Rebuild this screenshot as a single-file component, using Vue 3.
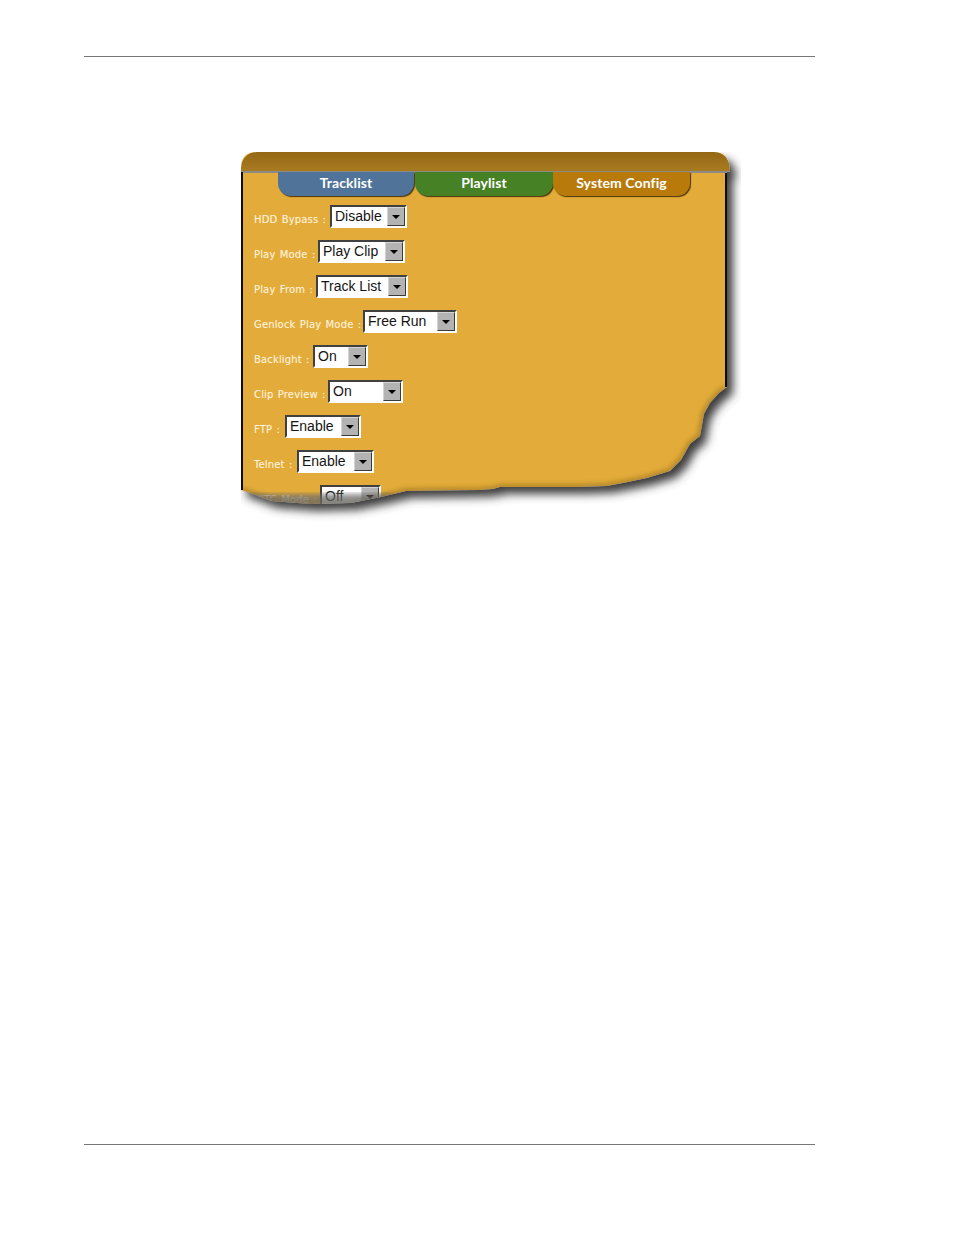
<script setup>
const rows = [
  { label: 'HDD Bypass :', value: 'Disable', labelWidth: 76, width: 77 },
  { label: 'Play Mode :', value: 'Play Clip', labelWidth: 64, width: 87 },
  { label: 'Play From :', value: 'Track List', labelWidth: 62, width: 92 },
  { label: 'Genlock Play Mode :', value: 'Free Run', labelWidth: 109, width: 94 },
  { label: 'Backlight :', value: 'On', labelWidth: 59, width: 55 },
  { label: 'Clip Preview :', value: 'On', labelWidth: 74, width: 75 },
  { label: 'FTP :', value: 'Enable', labelWidth: 31, width: 76 },
  { label: 'Telnet :', value: 'Enable', labelWidth: 43, width: 77 },
  { label: 'VITC Mode :', value: 'Off', labelWidth: 66, width: 61 }
]
const tabs = [
  { name: 'Tracklist', cls: 'blue' },
  { name: 'Playlist', cls: 'green' },
  { name: 'System Config', cls: 'amber' }
]
const tornEdge = 'L486 235L478 241L469 251L463 262L459 284L449 292L440 308L429 319L406 326L382 331L366 334L339 335L259 335L252 337L239 338L165 339L140 345L110 351L70 352L30 349L12 342L0 338'
const shape = 'M0 16Q0 0 16 0L473 0Q489 0 489 20L486 20' + tornEdge + 'Z'
</script>

<template>
  <div class="page">
    <div class="rule"></div>
    <div class="panel">
      <div class="body-fill"></div>
      <div class="head"></div>
      <div class="tabs">
        <div v-for="t in tabs" :key="t.name" class="tab" :class="t.cls">{{ t.name }}</div>
      </div>
      <div class="rows">
        <div v-for="r in rows" :key="r.label" class="row">
          <span class="label" :style="{ width: r.labelWidth + 'px' }">{{ r.label }}</span>
          <div class="select" :style="{ width: r.width + 'px' }">
            <span class="value">{{ r.value }}</span>
            <span class="btn"><i class="tri"></i></span>
          </div>
        </div>
      </div>
      <svg class="edge" viewBox="0 0 500 370" width="500" height="370">
        <defs>
          <filter id="soft" x="-10%" y="-10%" width="120%" height="120%"><feGaussianBlur stdDeviation="5" /></filter>
          <filter id="softer" x="-10%" y="-10%" width="120%" height="120%"><feGaussianBlur stdDeviation="2.6" /></filter>
          <clipPath id="inside"><path :d="shape" /></clipPath>
          <clipPath id="outside"><path clip-rule="evenodd" :d="'M-10 -10H510V380H-10Z' + shape" /></clipPath>
        </defs>
        <path fill="#fff" fill-rule="evenodd" :d="'M-10 -10H510V380H-10Z' + shape" />
        <g clip-path="url(#outside)">
          <path :d="shape" transform="translate(6 7)" fill="#3c3c3c" filter="url(#soft)" />
        </g>
        <g clip-path="url(#inside)">
          <path :d="'M486 235' + tornEdge" fill="none" stroke="#6b4d14" stroke-opacity=".45" stroke-width="5" filter="url(#softer)" />
          <path d="M-5 342H152V358H-5Z" fill="#6a6a6a" fill-opacity=".72" filter="url(#softer)" />
        </g>
        <path d="M1 20V338" stroke="#0c0c0c" stroke-width="2" fill="none" />
        <path d="M485 21V235" stroke="#0c0c0c" stroke-width="2" fill="none" />
      </svg>
    </div>
    <div class="rule bottom"></div>
  </div>
</template>

<style scoped>
.page {
  width: 954px;
  height: 1235px;
  box-sizing: border-box;
  background: #fff;
  padding: 56px 139px 90px 84px;
  display: flex;
  flex-direction: column;
  font-family: "Liberation Sans", Arial, sans-serif;
}
.rule {
  height: 1px;
  background: #777;
  flex: none;
}
.rule.bottom {
  margin-top: auto;
}
.panel {
  position: relative;
  width: 500px;
  height: 370px;
  margin: 95px 0 0 157px;
  overflow: hidden;
  flex: none;
}
.body-fill {
  position: absolute;
  inset: 0 14px 0 0;
  background: #e3ac3a;
}
.head {
  position: relative;
  height: 19px;
  width: 489px;
  background: linear-gradient(#946715, #a97b20);
  border-bottom: 2px solid #8b8b8b;
  border-radius: 16px 16px 0 0;
}
.tabs {
  position: relative;
  display: flex;
  margin: -1px 0 0 37px;
  height: 24px;
}
.tab {
  width: 138px;
  height: 24px;
  border-radius: 0 0 13px 13px;
  box-shadow: 1px 1px 1px #4a3208;
  color: #fff;
  font: 700 14px/21px Lato, sans-serif;
  letter-spacing: 0.1px;
  text-align: center;
}
.tab.blue { background: #4f7399; width: 136px; margin-right: 1px; }
.tab.green { background: #478126; }
.tab.amber { background: #b97a0c; width: 137px; }
.rows {
  position: relative;
  padding: 9px 0 0 13px;
  display: flex;
  flex-direction: column;
  gap: 12px;
}
.row {
  display: flex;
  height: 23px;
  align-items: flex-end;
}
.label {
  flex: none;
  font: 10px/13px "DejaVu Sans", sans-serif;
  letter-spacing: 0.15px;
  word-spacing: 1px;
  color: #fff3da;
  text-shadow: 0 0 1px rgba(255, 243, 218, 0.3);
  white-space: nowrap;
  padding-bottom: 2px;
}
.select {
  flex: none;
  display: flex;
  justify-content: space-between;
  box-sizing: border-box;
  height: 23px;
  background: #fff;
  border: 2px solid;
  border-color: #404040 #fff #fff #404040;
  padding: 0 0 0 3px;
  color: #141414;
  font-size: 14px;
  line-height: 19px;
}
.btn {
  flex: none;
  width: 18px;
  background: #b3b3b3;
  box-sizing: border-box;
  border: 1px solid;
  border-color: #d4d4d4 #3a3a3a #3a3a3a #d4d4d4;
  display: flex;
  align-items: center;
  justify-content: center;
}
.tri {
  width: 0;
  height: 0;
  border-left: 4px solid transparent;
  border-right: 4px solid transparent;
  border-top: 4px solid #000;
}
.edge {
  position: absolute;
  left: 0;
  top: 0;
  pointer-events: none;
}
</style>
